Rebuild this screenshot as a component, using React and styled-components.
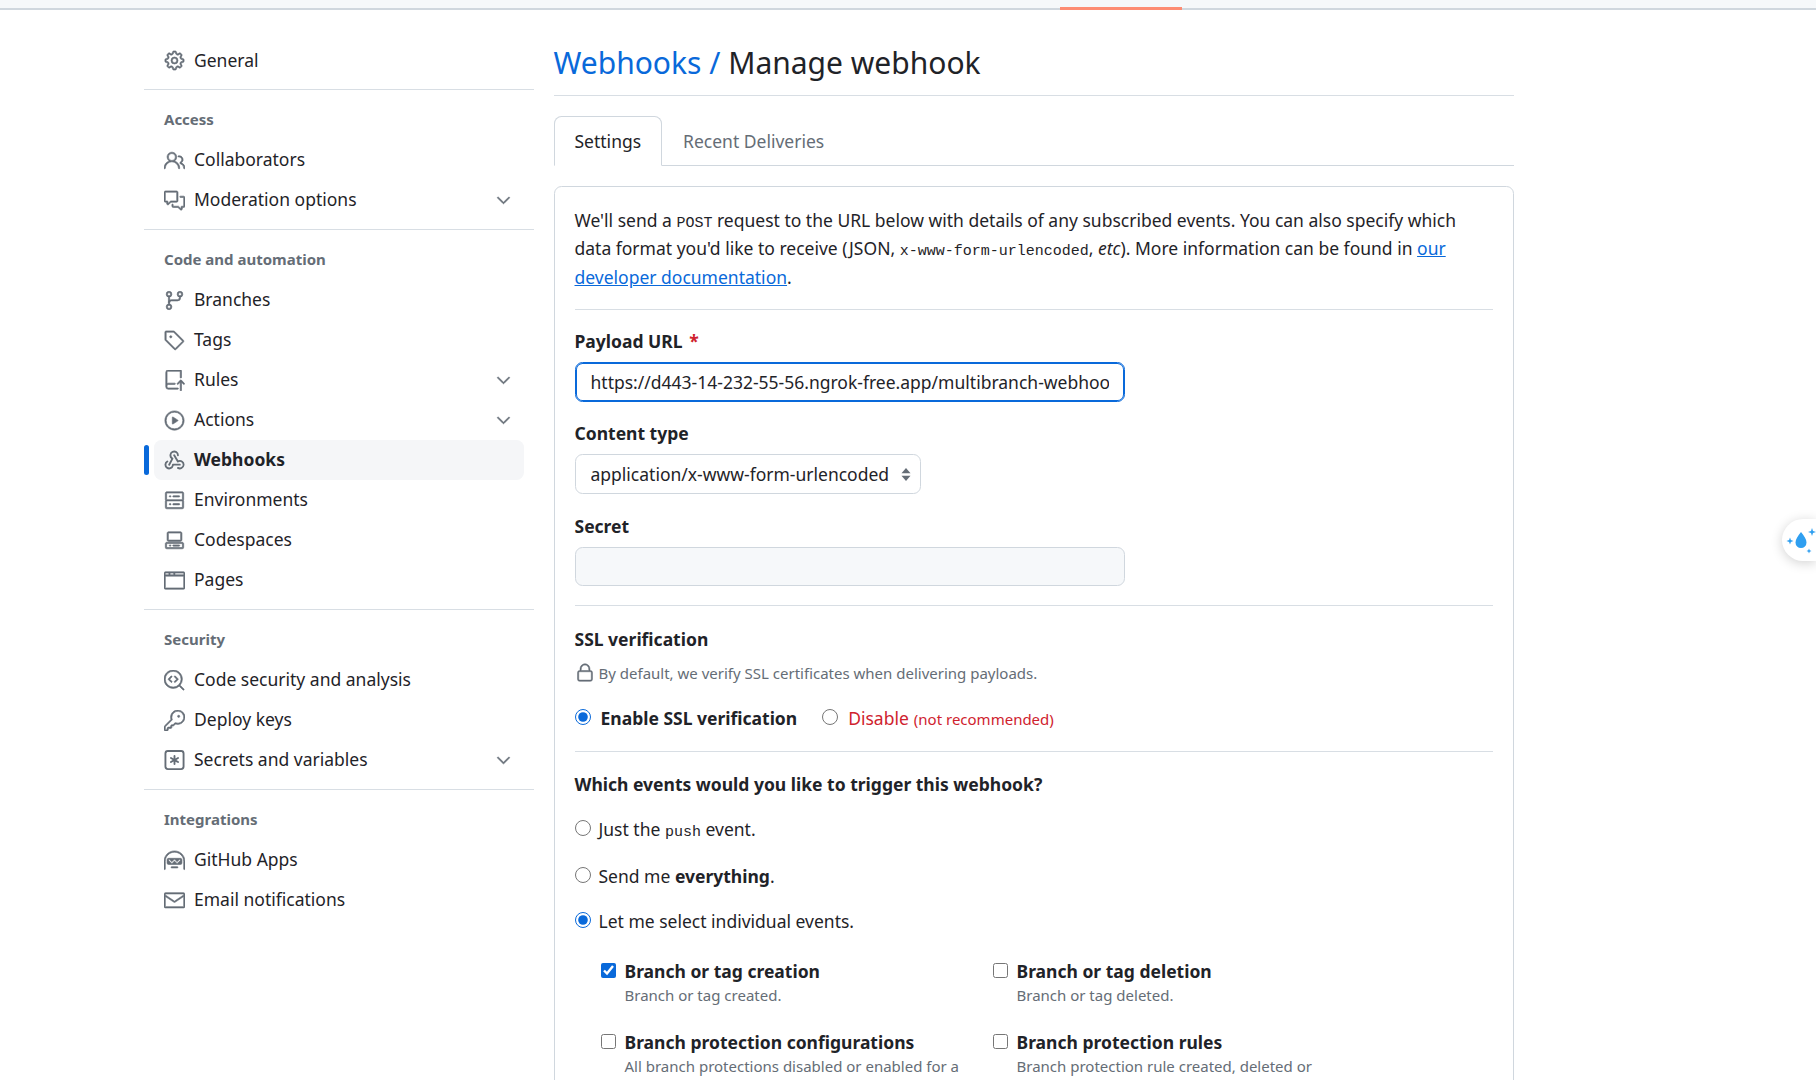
import React from "react";
import styled, { createGlobalStyle } from "styled-components";
import {
  GoGear,
  GoPeople,
  GoCommentDiscussion,
  GoGitBranch,
  GoTag,
  GoRepoPush,
  GoPlay,
  GoServer,
  GoCodespaces,
  GoBrowser,
  GoCodescan,
  GoKey,
  GoHubot,
  GoMail,
  GoChevronDown,
  GoLock,
} from "react-icons/go";

const GlobalStyle = createGlobalStyle`
  html, body {
    margin: 0;
    padding: 0;
    height: 100%;
    overflow: hidden;
    background: #fff;
  }
  body {
    font-family: "Noto Sans", sans-serif;
    font-size: 17.5px;
    color: #1f2328;
  }
  * {
    box-sizing: border-box;
  }
`;

const Page = styled.div`
  position: relative;
  height: 100vh;
  overflow: hidden;
`;

const TopBar = styled.div`
  position: relative;
  height: 10px;
  background: #f6f8fa;
  border-bottom: 2px solid #d0d7de;
`;

const Progress = styled.div`
  position: absolute;
  left: 1060px;
  bottom: -2px;
  width: 122px;
  height: 3px;
  background: #fd8c73;
`;

const Layout = styled.div`
  display: flex;
  align-items: flex-start;
  gap: 19.5px;
  padding-left: 144px;
`;

const Sidebar = styled.nav`
  width: 390px;
  flex-shrink: 0;
  padding-top: 30px;
`;

const NavDivider = styled.div`
  height: 1px;
  margin-top: 9px;
  background: #d8dee4;
`;

const NavHeading = styled.div`
  height: 20px;
  margin: 19px 0 11px 20px;
  font-size: 15px;
  line-height: 20px;
  font-weight: 700;
  color: #656d76;
`;

const NavItem = styled.div`
  position: relative;
  display: flex;
  align-items: center;
  gap: 9px;
  width: 370px;
  height: 40px;
  margin-left: 10px;
  padding: 0 10px;
  border-radius: 7.5px;
  background: ${(props) => (props.$active ? "#f5f6f8" : "transparent")};
  font-weight: ${(props) => (props.$active ? 700 : 400)};
  color: #1f2328;

  svg {
    flex-shrink: 0;
    color: #656d76;
    stroke: #656d76;
    stroke-width: 0.7;
  }
`;

const ActiveBar = styled.span`
  position: absolute;
  left: -10px;
  top: 5px;
  width: 5px;
  height: 30px;
  border-radius: 7px;
  background: #0969da;
`;

const NavLabel = styled.span`
  flex: 1;
  padding-bottom: ${(props) => (props.$flush ? 0 : 2)}px;
  white-space: nowrap;
`;

const Main = styled.main`
  width: 960px;
  flex-shrink: 0;
`;

const Subhead = styled.div`
  margin-top: 30px;
  padding-bottom: 10px;
  border-bottom: 1px solid #d8dee4;
`;

const Title = styled.h2`
  margin: 0;
  font-size: 30px;
  line-height: 45px;
  font-weight: 400;
`;

const Crumb = styled.a`
  color: #0969da;
`;

const TabBar = styled.div`
  display: flex;
  height: 50px;
  margin-top: 20px;
  border-bottom: 1px solid #d0d7de;
`;

const Tab = styled.div`
  height: 50px;
  padding: 0 20px;
  line-height: 49px;
  border: 1px solid ${(props) => (props.$selected ? "#d0d7de" : "transparent")};
  border-bottom: 1px solid ${(props) => (props.$selected ? "#fff" : "transparent")};
  border-radius: 7.5px 7.5px 0 0;
  color: ${(props) => (props.$selected ? "#1f2328" : "#656d76")};
`;

const Box = styled.section`
  margin-top: 20px;
  padding: 19px 20px 20px;
  border: 1px solid #d0d7de;
  border-radius: 7.5px;
`;

const Intro = styled.p`
  margin: 0;
  line-height: 28.4px;
`;

const Mono = styled.code`
  font-family: "Liberation Mono", monospace;
  font-size: 15px;
  line-height: 1;
`;

const DocLink = styled.a`
  color: #0969da;
  text-decoration: underline;
`;

const Rule = styled.hr`
  height: 1px;
  margin: ${(props) => props.$top || 18}px 0 0;
  border: 0;
  background: #d8dee4;
`;

const Label = styled.label`
  display: block;
  height: 28px;
  margin-top: ${(props) => props.$top || 18}px;
  line-height: 26px;
  font-weight: 700;
`;

const Required = styled.span`
  margin-left: 2px;
  color: #cf222e;
`;

const TextInput = styled.input`
  display: block;
  width: 550px;
  height: ${(props) => (props.$focused ? 40 : 39)}px;
  margin-top: 6px;
  padding: 0 15px;
  border: 1px solid #d0d7de;
  border-radius: 7.5px;
  outline: none;
  background: ${(props) => (props.$focused ? "#fff" : "#f6f8fa")};
  font-family: "Noto Sans", sans-serif;
  font-size: 17.5px;
  color: #1f2328;
  ${(props) =>
    props.$focused &&
    `
    border-color: #0969da;
    box-shadow: inset 0 0 0 1px #0969da;
  `}
`;

const SelectWrap = styled.div`
  position: relative;
  width: 346px;
  height: 40px;
  margin-top: 6px;
`;

const Select = styled.select`
  display: block;
  width: 100%;
  height: 100%;
  padding: 0 15px;
  appearance: none;
  border: 1px solid #d0d7de;
  border-radius: 7.5px;
  background: #fff;
  font-family: "Noto Sans", sans-serif;
  font-size: 17.5px;
  color: #1f2328;
`;

const SelectArrow = styled.svg`
  position: absolute;
  right: 10px;
  top: 14px;
  pointer-events: none;
`;

const SectionTitle = styled.div`
  height: 28px;
  margin-top: ${(props) => props.$top || 20}px;
  line-height: 26px;
  font-weight: 700;
`;

const Help = styled.div`
  display: flex;
  align-items: center;
  gap: 4px;
  height: 20px;
  margin-top: 9px;
  font-size: 15px;
  line-height: 20px;
  color: #656d76;

  svg {
    stroke: #656d76;
    stroke-width: 0.6;
  }
`;

const ChoiceRow = styled.div`
  display: flex;
  align-items: center;
  gap: 25px;
  height: 28px;
  margin-top: ${(props) => props.$top}px;
`;

const Choice = styled.label`
  display: flex;
  align-items: center;
  gap: ${(props) => props.$gap || 10}px;
  line-height: 28px;
  font-weight: ${(props) => (props.$strong ? 700 : 400)};
  color: ${(props) => (props.$danger ? "#cf222e" : "#1f2328")};
  white-space: nowrap;
`;

const Radio = styled.input.attrs({ type: "radio" })`
  width: 16px;
  height: 16px;
  margin: -3px 0 0 0;
  accent-color: #0969da;
  flex-shrink: 0;
`;

const SmallNote = styled.span`
  margin-left: 5px;
  font-size: 15px;
`;

const EventGrid = styled.div`
  display: grid;
  grid-template-columns: 392px 392px;
  row-gap: 23px;
  margin: 22px 0 0 26px;
`;

const EventItem = styled.label`
  display: grid;
  grid-template-columns: 15px 1fr;
  column-gap: 9px;
`;

const Check = styled.input.attrs({ type: "checkbox" })`
  width: 15px;
  height: 15px;
  margin: 6px 0 0;
  accent-color: #0969da;
`;

const EventName = styled.div`
  line-height: 28px;
  font-weight: 700;
`;

const EventNote = styled.div`
  grid-column: 2;
  max-width: 340px;
  font-size: 15px;
  line-height: 20px;
  color: #656d76;
`;

const DropWidget = styled.div`
  position: absolute;
  right: 0;
  top: 519px;
  display: flex;
  align-items: center;
  width: 34px;
  height: 42px;
  border-radius: 21px 0 0 21px;
  background: #fff;
  box-shadow: 0 2px 12px rgba(0, 0, 0, 0.18);
`;

const WebhookIcon = () => (
  <svg width="21" height="20" viewBox="0 0 16 16" fill="currentColor">
    <path stroke="none" d="M5.5 4.25a2.25 2.25 0 0 1 4.5 0 .75.75 0 0 0 1.5 0 3.75 3.75 0 1 0-6.14 2.889l-2.272 4.258a.75.75 0 0 0 1.324.706L7 7.25a.75.75 0 0 0-.309-1.01A2.25 2.25 0 0 1 5.5 4.25Z" />
    <path stroke="none" d="M7.364 3.607a.75.75 0 0 1 1.03.257l2.608 4.349a3.75 3.75 0 1 1-.628 6.785.75.75 0 0 1 .752-1.299 2.25 2.25 0 1 0-.033-3.88.75.75 0 0 1-1.03-.256L7.107 4.636a.75.75 0 0 1 .257-1.03Z" />
    <path stroke="none" d="M2.9 8.776A.75.75 0 0 1 2.625 9.8 2.25 2.25 0 1 0 6 11.75a.75.75 0 0 1 .75-.751h5.5a.75.75 0 0 1 0 1.5H7.425a3.751 3.751 0 1 1-5.55-3.998.75.75 0 0 1 1.024.274Z" />
  </svg>
);

const KeyAsteriskIcon = () => (
  <svg width="21" height="20" viewBox="0 0 16 16" fill="currentColor">
    <path stroke="none" d="M0 2.75A2.75 2.75 0 0 1 2.75 0h10.5A2.75 2.75 0 0 1 16 2.75v10.5A2.75 2.75 0 0 1 13.25 16H2.75A2.75 2.75 0 0 1 0 13.25ZM2.75 1.5c-.69 0-1.25.56-1.25 1.25v10.5c0 .69.56 1.25 1.25 1.25h10.5c.69 0 1.25-.56 1.25-1.25V2.75c0-.69-.56-1.25-1.25-1.25Z" />
    <path stroke="none" d="M8 4a.75.75 0 0 1 .75.75V6.7l1.69-.975a.75.75 0 0 1 .75 1.3L9.5 8l1.69.976a.75.75 0 0 1-.75 1.298L8.75 9.3v1.951a.75.75 0 0 1-1.5 0V9.299l-1.69.976a.75.75 0 0 1-.75-1.3L6.5 8l-1.69-.975a.75.75 0 0 1 .75-1.3l1.69.976V4.75A.75.75 0 0 1 8 4Z" />
  </svg>
);

const navGroups = [
  {
    items: [{ icon: GoGear, label: "General" }],
  },
  {
    heading: "Access",
    items: [
      { icon: GoPeople, label: "Collaborators" },
      { icon: GoCommentDiscussion, label: "Moderation options", more: true },
    ],
  },
  {
    heading: "Code and automation",
    items: [
      { icon: GoGitBranch, label: "Branches" },
      { icon: GoTag, label: "Tags" },
      { icon: GoRepoPush, label: "Rules", more: true },
      { icon: GoPlay, label: "Actions", more: true },
      { icon: WebhookIcon, label: "Webhooks", active: true },
      { icon: GoServer, label: "Environments" },
      { icon: GoCodespaces, label: "Codespaces" },
      { icon: GoBrowser, label: "Pages" },
    ],
  },
  {
    heading: "Security",
    items: [
      { icon: GoCodescan, label: "Code security and analysis" },
      { icon: GoKey, label: "Deploy keys" },
      { icon: KeyAsteriskIcon, label: "Secrets and variables", more: true },
    ],
  },
  {
    heading: "Integrations",
    items: [
      { icon: GoHubot, label: "GitHub Apps" },
      { icon: GoMail, label: "Email notifications" },
    ],
  },
];

const events = [
  { name: "Branch or tag creation", note: "Branch or tag created.", checked: true },
  { name: "Branch or tag deletion", note: "Branch or tag deleted." },
  { name: "Branch protection configurations", note: "All branch protections disabled or enabled for a repository." },
  { name: "Branch protection rules", note: "Branch protection rule created, deleted or edited." },
];

const Droplet = () => (
  <svg width="34" height="42" viewBox="0 0 34 42" fill="#2f9ff0">
    <path d="M19 13c3 4 5.500 7 5.500 10.500a5.500 5.500 0 0 1-11 0C13.500 20 16 17 19 13z" />
    <path d="M8 18.500l.9 2.600 2.600.9-2.600.9-.9 2.600-.9-2.600-2.600-.9 2.600-.9z" />
    <path d="M30 9l1 3 3 1-3 1-1 3-1-3-3-1 3-1z" />
    <path d="M27 29.500l.7 1.800 1.800.7-1.800.7-.7 1.800-.7-1.800-1.800-.7 1.800-.7z" />
  </svg>
);

const App = () => (
  <Page>
    <GlobalStyle />
    <TopBar>
      <Progress />
    </TopBar>
    <Layout>
      <Sidebar>
        {navGroups.map((group, index) => (
          <div key={index}>
            {group.heading && <NavHeading>{group.heading}</NavHeading>}
            {group.items.map(({ icon: Icon, label, more, active }) => (
              <NavItem key={label} $active={active}>
                {active && <ActiveBar />}
                <Icon size={21} />
                <NavLabel $flush={!group.heading}>{label}</NavLabel>
                {more && <GoChevronDown size={21} />}
              </NavItem>
            ))}
            {index < navGroups.length - 1 && <NavDivider />}
          </div>
        ))}
      </Sidebar>

      <Main>
        <Subhead>
          <Title>
            <Crumb>Webhooks /</Crumb> Manage webhook
          </Title>
        </Subhead>

        <TabBar>
          <Tab $selected>Settings</Tab>
          <Tab>Recent Deliveries</Tab>
        </TabBar>

        <Box>
          <Intro>
            We'll send a <Mono>POST</Mono> request to the URL below with details of any subscribed
            events. You can also specify which data format you'd like to receive (JSON,{" "}
            <Mono>x-www-form-urlencoded</Mono>, <em>etc</em>). More information can be found in{" "}
            <DocLink>our developer documentation</DocLink>.
          </Intro>
          <Rule />

          <Label>
            Payload URL <Required>*</Required>
          </Label>
          <TextInput
            $focused
            readOnly
            value="https://d443-14-232-55-56.ngrok-free.app/multibranch-webhook/"
          />

          <Label>Content type</Label>
          <SelectWrap>
            <Select defaultValue="form">
              <option value="form">application/x-www-form-urlencoded</option>
              <option value="json">application/json</option>
            </Select>
            <SelectArrow width="10" height="13" viewBox="0 0 10 13" fill="#656d76">
              <path d="M5 0l4.500 5.200H.5z" />
              <path d="M5 13L.5 7.800h9z" />
            </SelectArrow>
          </SelectWrap>

          <Label $top={19}>Secret</Label>
          <TextInput readOnly />
          <Rule $top={19} />

          <SectionTitle>SSL verification</SectionTitle>
          <Help>
            <GoLock size={20} />
            By default, we verify SSL certificates when delivering payloads.
          </Help>
          <ChoiceRow $top={21}>
            <Choice $strong>
              <Radio name="ssl" defaultChecked />
              Enable SSL verification
            </Choice>
            <Choice $danger>
              <Radio name="ssl" />
              <span>
                Disable<SmallNote>(not recommended)</SmallNote>
              </span>
            </Choice>
          </ChoiceRow>
          <Rule $top={19} />

          <SectionTitle $top={19}>Which events would you like to trigger this webhook?</SectionTitle>
          <ChoiceRow $top={16}>
            <Choice $gap={8}>
              <Radio name="events" />
              <span>
                Just the <Mono>push</Mono> event.
              </span>
            </Choice>
          </ChoiceRow>
          <ChoiceRow $top={19}>
            <Choice $gap={8}>
              <Radio name="events" />
              <span>
                Send me <strong>everything</strong>.
              </span>
            </Choice>
          </ChoiceRow>
          <ChoiceRow $top={17}>
            <Choice $gap={8}>
              <Radio name="events" defaultChecked />
              Let me select individual events.
            </Choice>
          </ChoiceRow>

          <EventGrid>
            {events.map((event) => (
              <EventItem key={event.name}>
                <Check defaultChecked={event.checked} />
                <EventName>{event.name}</EventName>
                <EventNote>{event.note}</EventNote>
              </EventItem>
            ))}
          </EventGrid>
        </Box>
      </Main>
    </Layout>
    <DropWidget>
      <Droplet />
    </DropWidget>
  </Page>
);

export default App;
